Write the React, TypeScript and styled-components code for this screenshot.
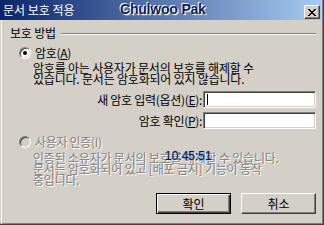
import styled, { createGlobalStyle, css } from "styled-components";

const GlobalStyle = createGlobalStyle`
  html, body {
    margin: 0;
    padding: 0;
    background: #d4d0c8;
  }
  body {
    font-family: "Noto Sans CJK KR", "Noto Sans", sans-serif;
    font-size: 12px;
    color: #000;
  }
`;

const Window = styled.div`
  position: relative;
  box-sizing: border-box;
  width: 324px;
  height: 225px;
  display: flex;
  flex-direction: column;
  background: #d4d0c8;
  border-right: 1px solid #404040;
  border-bottom: 1px solid #404040;
  box-shadow: inset -1px -1px 0 #808080;
  overflow: hidden;
`;

const TitleBar = styled.div`
  height: 20px;
  margin-right: 2px;
  display: flex;
  align-items: center;
  padding-left: 3px;
  background: linear-gradient(to right, #0a246a, #a6caf0);
  flex-shrink: 0;
`;

const TitleText = styled.span`
  color: #fff;
  font-size: 12px;
  line-height: 12px;
  letter-spacing: 0;
`;

const CloseButton = styled.div`
  margin-left: auto;
  margin-right: 1px;
  align-self: flex-end;
  margin-bottom: 1px;
  box-sizing: border-box;
  width: 16px;
  height: 14px;
  background: #d4d0c8;
  border: 1px solid;
  border-color: #fff #404040 #404040 #fff;
  box-shadow: inset -1px -1px 0 #808080;
  display: flex;
  align-items: center;
  justify-content: center;
`;

const Body = styled.div`
  flex: 1;
  margin-left: 1px;
  margin-right: 3px;
  border-left: 1px solid #fff;
  padding: 7px 4px 0 8px;
  display: flex;
  flex-direction: column;
`;

const GroupHeader = styled.div`
  display: flex;
  align-items: center;
  height: 12px;
`;

const GroupLabel = styled.span`
  line-height: 12px;
  letter-spacing: -0.2px;
`;

const EtchedLine = styled.div`
  flex: 1;
  margin-left: 5px;
  height: 1px;
  background: #808080;
  border-bottom: 1px solid #fff;
  margin-top: 1px;
`;

const RadioRow = styled.div<{ $top: number }>`
  display: flex;
  align-items: center;
  margin-top: ${(p) => p.$top}px;
  margin-left: 9px;
  height: 12px;
  gap: 4px;
`;

const RadioCircle = styled.span<{ $checked?: boolean; $disabled?: boolean }>`
  position: relative;
  box-sizing: border-box;
  width: 12px;
  height: 12px;
  border-radius: 50%;
  border: 1px solid;
  border-color: #808080 #fff #fff #808080;
  box-shadow: inset 1px 1px 0 #404040, inset -1px -1px 0 #d4d0c8;
  background: ${(p) => (p.$disabled ? "#d4d0c8" : "#fff")};
  ${(p) =>
    p.$checked &&
    css`
      &::after {
        content: "";
        position: absolute;
        left: 3px;
        top: 3px;
        width: 4px;
        height: 4px;
        border-radius: 50%;
        background: #000;
      }
    `}
`;

const disabledText = css`
  color: #808080;
  text-shadow: 1px 1px 0 #fff;
`;

const RadioLabel = styled.span<{ $disabled?: boolean }>`
  line-height: 12px;
  letter-spacing: -0.3px;
  ${(p) => p.$disabled && disabledText}
`;

const Description = styled.p<{ $top: number; $disabled?: boolean }>`
  margin: ${(p) => p.$top}px 0 0 23px;
  line-height: 11px;
  letter-spacing: -0.2px;
  white-space: nowrap;
  ${(p) => p.$disabled && disabledText}
`;

const Fields = styled.div`
  margin-top: 7px;
  display: grid;
  grid-template-columns: 1fr 113px;
  column-gap: 1px;
  row-gap: 4px;
  align-items: center;
`;

const FieldLabel = styled.span`
  text-align: right;
  line-height: 12px;
  letter-spacing: -0.3px;
  white-space: nowrap;
`;

const TextBox = styled.div`
  box-sizing: border-box;
  height: 17px;
  background: #fff;
  border: 1px solid;
  border-color: #808080 #fff #fff #808080;
  box-shadow: inset 1px 1px 0 #404040, inset -1px -1px 0 #d4d0c8;
  display: flex;
  align-items: center;
  padding-left: 3px;
`;

const Caret = styled.span`
  width: 1px;
  height: 11px;
  background: #000;
`;

const ButtonRow = styled.div`
  margin-top: 8px;
  display: flex;
  justify-content: flex-end;
  gap: 10px;
`;

const Button = styled.div<{ $default?: boolean }>`
  box-sizing: border-box;
  width: 75px;
  height: 21px;
  display: flex;
  align-items: center;
  justify-content: center;
  background: #d4d0c8;
  line-height: 12px;
  ${(p) =>
    p.$default
      ? css`
          border: 1px solid #000;
          box-shadow: inset 1px 1px 0 #fff, inset -1px -1px 0 #404040,
            inset -2px -2px 0 #808080;
        `
      : css`
          border: 1px solid;
          border-color: #fff #404040 #404040 #fff;
          box-shadow: inset -1px -1px 0 #808080;
        `}
`;

const Access = styled.span`
  text-decoration: underline;
  text-underline-offset: 1px;
`;

const Watermark = styled.div`
  position: absolute;
  left: 120px;
  top: 1px;
  font-family: "Liberation Sans", Arial, sans-serif;
  font-weight: 700;
  font-size: 14px;
  line-height: 16px;
  letter-spacing: -0.2px;
  color: #0c1c5c;
  text-shadow: -1px -1px 0 #fff, 1px 1px 0 #fff, 2px 2px 0 #909090;
`;

const Clock = styled.div`
  position: absolute;
  left: 165px;
  top: 150px;
  font-family: "Liberation Sans", Arial, sans-serif;
  font-size: 12px;
  line-height: 13px;
  color: #0c1456;
  text-shadow: 0 0 1px #4a9cff;
`;

const CloseIcon = () => (
  <svg width="8" height="7" viewBox="0 0 8 7" shapeRendering="crispEdges">
    <path
      d="M0 0h2v1h1v1h2v-1h1v-1h2v1h-1v1h-1v1h-1v1h1v1h1v1h1v1h-2v-1h-1v-1h-2v1h-1v1h-2v-1h1v-1h1v-1h1v-1h-1v-1h-1v-1h-1z"
      fill="#000"
    />
  </svg>
);

export default function App() {
  return (
    <>
      <GlobalStyle />
      <Window>
        <TitleBar>
          <TitleText>문서 보호 적용</TitleText>
          <CloseButton>
            <CloseIcon />
          </CloseButton>
        </TitleBar>
        <Body>
          <GroupHeader>
            <GroupLabel>보호 방법</GroupLabel>
            <EtchedLine />
          </GroupHeader>
          <RadioRow $top={8}>
            <RadioCircle $checked />
            <RadioLabel>
              암호(<Access>A</Access>)
            </RadioLabel>
          </RadioRow>
          <Description $top={3}>
            암호를 아는 사용자가 문서의 보호를 해제할 수
            <br />
            있습니다. 문서는 암호화되어 있지 않습니다.
          </Description>
          <Fields>
            <FieldLabel>
              새 암호 입력(옵션)(<Access>E</Access>):
            </FieldLabel>
            <TextBox>
              <Caret />
            </TextBox>
            <FieldLabel>
              암호 확인(<Access>P</Access>):
            </FieldLabel>
            <TextBox />
          </Fields>
          <RadioRow $top={7}>
            <RadioCircle $disabled />
            <RadioLabel $disabled>사용자 인증(I)</RadioLabel>
          </RadioRow>
          <Description $top={4} $disabled>
            인증된 소유자가 문서의 보호를 해제할 수 있습니다.
            <br />
            문서는 암호화되어 있고 [배포 금지] 기능이 동작
            <br />
            중입니다.
          </Description>
          <ButtonRow>
            <Button $default>확인</Button>
            <Button>취소</Button>
          </ButtonRow>
        </Body>
        <Watermark>Chulwoo Pak</Watermark>
        <Clock>10:45:51</Clock>
      </Window>
    </>
  );
}
